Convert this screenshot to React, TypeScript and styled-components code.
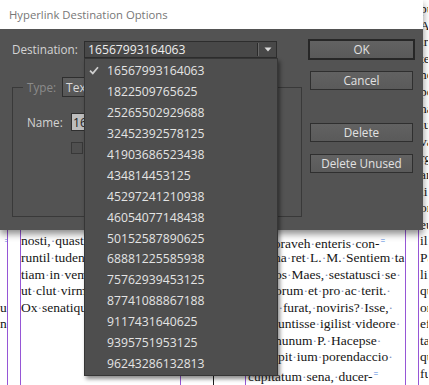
import React from 'react';
import styled, { createGlobalStyle } from 'styled-components';

const GlobalStyle = createGlobalStyle`
  html, body { margin: 0; padding: 0; background: #ffffff; }
  body { width: 429px; height: 385px; overflow: hidden; }
  * { box-sizing: border-box; }
`;

const PURPLE = '#9656d6';

const Stage = styled.div`
  position: relative;
  width: 429px;
  height: 385px;
  overflow: hidden;
  background: #ffffff;
`;

/* ---------- document behind the dialog ---------- */

const Spread = styled.div`
  display: flex;
  height: 100%;
  padding-top: 1px;
  font-family: 'Liberation Serif', 'DejaVu Serif', serif;
  font-size: 13.5px;
  line-height: 16.6px;
  color: #161616;
`;

const Column = styled.div<{ $width: number; $edge?: string; $pad?: number }>`
  flex: 0 0 ${p => p.$width}px;
  width: ${p => p.$width}px;
  border-right: 1px solid ${p => p.$edge ?? 'transparent'};
  padding-left: ${p => p.$pad ?? 0}px;
  display: flex;
  flex-direction: column;
  overflow: hidden;
  white-space: nowrap;
`;

const DocLine = styled.div<{ $indent?: number }>`
  height: 16.6px;
  flex: 0 0 16.6px;
  padding-left: ${p => p.$indent ?? 0}px;
`;

const Dot = styled.span`
  color: #8493bd;
`;

const Mark = styled.span`
  color: #4f86e0;
  font-family: 'Liberation Sans', sans-serif;
  font-size: 8px;
  vertical-align: 5px;
  margin-left: 1px;
`;

/* ---------- dialog ---------- */

const Dialog = styled.div`
  position: absolute;
  left: 0;
  top: 0;
  width: 423px;
  height: 230px;
  display: flex;
  flex-direction: column;
  font-family: 'Open Sans', 'Noto Sans', sans-serif;
  box-shadow: 0 4px 7px rgba(0, 0, 0, 0.45);
  z-index: 2;
`;

const TitleBar = styled.div`
  flex: 0 0 29px;
  height: 29px;
  background: #ffffff;
  display: flex;
  align-items: center;
  padding-left: 9px;
  padding-bottom: 1px;
  color: #777777;
  font-size: 11.3px;
`;

const Body = styled.div`
  flex: 1;
  background: #535353;
  display: flex;
  gap: 6px;
  padding: 10px 8px 0 12px;
`;

const FormCol = styled.div`
  width: 290px;
  display: flex;
  flex-direction: column;
`;

const DestRow = styled.div`
  height: 20px;
  display: flex;
  align-items: center;
`;

const Label = styled.span<{ $width?: number; $dim?: boolean }>`
  flex: 0 0 ${p => (p.$width ? `${p.$width}px` : 'auto')};
  color: ${p => (p.$dim ? '#8b8b8b' : '#d3d3d3')};
  font-size: 11.7px;
  line-height: 16px;
`;

const SelectBox = styled.div`
  position: relative;
  width: 193px;
  height: 17px;
  border: 1px solid #2d2d2d;
  background: #484848;
  display: flex;
  align-items: center;
  padding-left: 3px;
  color: #eeeeee;
  font-size: 12.2px;
`;

const SelectValue = styled.span`
  flex: 1;
  line-height: 15px;
`;

const Divider = styled.span`
  width: 2px;
  height: 13px;
  border-left: 1px solid #2a2a2a;
  border-right: 1px solid #686868;
`;

const ArrowSlot = styled.span`
  width: 17px;
  display: flex;
  justify-content: center;
  align-items: center;
`;

const Menu = styled.div`
  position: absolute;
  left: -1px;
  top: calc(100% + 1px);
  width: 194px;
  background: #4e4e4e;
  border: 1px solid #363636;
  padding: 2px 0 1px;
  box-shadow: 2px 3px 4px rgba(0, 0, 0, 0.45);
  z-index: 5;
`;

const MenuItem = styled.div`
  height: 20.9px;
  display: flex;
  align-items: center;
  color: #e4e4e4;
  font-size: 12.2px;
`;

const CheckSlot = styled.span`
  flex: 0 0 22px;
  display: flex;
  align-items: center;
  padding-left: 4px;
`;

const Group = styled.fieldset`
  margin: 18px 0 0 0;
  padding: 16px 0 0 14px;
  height: 140px;
  border: 1px solid #393939;
  min-width: 0;
`;

const Legend = styled.legend`
  margin-left: -4px;
  padding: 0 4px 0 4px;
  display: flex;
  align-items: center;
  gap: 6px;
`;

const TypeSelect = styled.div`
  width: 150px;
  height: 20px;
  border: 1px solid #2e2e2e;
  background: linear-gradient(#5e5e5e, #575757);
  color: #dadada;
  font-size: 12px;
  display: flex;
  align-items: center;
  padding-left: 3px;
  overflow: hidden;
  white-space: nowrap;
`;

const FieldRow = styled.div`
  display: flex;
  align-items: center;
`;

const TextInput = styled.div`
  width: 190px;
  height: 18px;
  border: 1px solid #2f2f2f;
  background: #bdbdbd;
  color: #1e1e1e;
  font-size: 12.2px;
  display: flex;
  align-items: center;
  padding-left: 1px;
`;

const CheckRow = styled.div`
  display: flex;
  align-items: center;
  margin: 11px 0 0 44px;
`;

const CheckBox = styled.span`
  width: 12px;
  height: 12px;
  border: 1px solid #383838;
  background: #4f4f4f;
`;

const ButtonCol = styled.div`
  width: 107px;
  display: flex;
  flex-direction: column;
  align-items: center;
`;

const Button = styled.div<{ $default?: boolean; $gap?: number }>`
  width: ${p => (p.$default ? 107 : 103)}px;
  height: ${p => (p.$default ? 21 : 19)}px;
  margin-top: ${p => p.$gap ?? 0}px;
  border: ${p => (p.$default ? '2px solid #272727' : '1px solid #2f2f2f')};
  background: linear-gradient(#626262, #5a5a5a);
  color: #e2e2e2;
  font-size: 11.7px;
  display: flex;
  align-items: center;
  justify-content: center;
  padding-bottom: 1px;
`;

/* ---------- data ---------- */

const destinations = [
  '16567993164063',
  '1822509765625',
  '25265502929688',
  '32452392578125',
  '41903686523438',
  '434814453125',
  '45297241210938',
  '46054077148438',
  '50152587890625',
  '68881225585938',
  '75762939453125',
  '87741088867188',
  '9117431640625',
  '9395751953125',
  '96243286132813',
];

type Row = { text: string; indent?: number; mark?: boolean };

const blank = (n: number): Row[] => Array.from({ length: n }, () => ({ text: '' }));

const colA: Row[] = [
  ...blank(14),
  { text: '', mark: true },
  { text: '' },
  { text: '' },
  { text: '' },
  { text: 'u,' },
  { text: 'n·' },
  ...blank(3),
];

const colB: Row[] = [
  ...blank(14),
  { text: 'nosti,·quast' },
  { text: 'runtil·tuden' },
  { text: 'tiam·in·vem' },
  { text: 'ut·clut·virm' },
  { text: 'Ox·senatiqu' },
  ...blank(4),
];

const colC: Row[] = [
  ...blank(14),
  { text: 'poraveh·enteris·con-', indent: 20, mark: true },
  { text: 'na·ret·L.·M.·Sentiem·ta·', indent: 27 },
  { text: 'os·Maes,·sestatusci·se·', indent: 28 },
  { text: 'orum·et·pro·ac·terit.·', indent: 28 },
  { text: ',·furat,·noviris?·Isse,·', indent: 28 },
  { text: 'untisse·igilist·videore·', indent: 31 },
  { text: 'nunum·P.·Hacepse·', indent: 28 },
  { text: 'pit·ium·porendaccio·', indent: 31 },
  { text: 'cupitatum·sena,·ducer-', indent: 1, mark: true },
];

const colD: Row[] = [
  'pu', 'Ad', 'ir', 'te', 'ne', 'pe', 'ha', 'lu', 'va', 'rg', 'an', 'li', 'or', 'eu',
  'ili', 'Pa', 'lil', 'qu', 'or', 'ef', 'ta', 'qu', 'fu',
].map(t => ({ text: t }));

const renderText = (text: string) => {
  const parts = text.split('·');
  return parts.map((part, i) => (
    <React.Fragment key={i}>
      {part}
      {i < parts.length - 1 && <Dot>·</Dot>}
    </React.Fragment>
  ));
};

const Lines: React.FC<{ rows: Row[] }> = ({ rows }) => (
  <>
    {rows.map((r, i) => (
      <DocLine key={i} $indent={r.indent}>
        {r.text ? renderText(r.text) : '\u00a0'}
        {r.mark && <Mark>=</Mark>}
      </DocLine>
    ))}
  </>
);

const Check = () => (
  <svg width="10" height="9" viewBox="0 0 10 9">
    <polyline points="1,4.6 3.8,7.4 9,1.2" fill="none" stroke="#cfcfcf" strokeWidth="1.7" />
  </svg>
);

const Arrow = () => (
  <svg width="8" height="5" viewBox="0 0 8 5">
    <polygon points="0.5,0.5 7.5,0.5 4,4.5" fill="#dcdcdc" />
  </svg>
);

export default function App() {
  const selected = destinations[0];
  return (
    <>
      <GlobalStyle />
      <Stage>
        <Spread>
          <Column $width={8} $edge={PURPLE}>
            <Lines rows={colA} />
          </Column>
          <Column $width={13} $edge={PURPLE} />
          <Column $width={160} $edge={PURPLE}>
            <Lines rows={colB} />
          </Column>
          <Column $width={33} $edge="#1e1e1e" />
          <Column $width={32} $edge={PURPLE} />
          <Column $width={160} $edge={PURPLE} $pad={1}>
            <Lines rows={colC} />
          </Column>
          <Column $width={13} $edge={PURPLE} />
          <Column $width={10} $pad={1}>
            <Lines rows={colD} />
          </Column>
        </Spread>

        <Dialog>
          <TitleBar>Hyperlink Destination Options</TitleBar>
          <Body>
            <FormCol>
              <DestRow>
                <Label $width={72}>Destination:</Label>
                <SelectBox>
                  <SelectValue>{selected}</SelectValue>
                  <Divider />
                  <ArrowSlot>
                    <Arrow />
                  </ArrowSlot>
                  <Menu>
                    {destinations.map(d => (
                      <MenuItem key={d}>
                        <CheckSlot>{d === selected && <Check />}</CheckSlot>
                        {d}
                      </MenuItem>
                    ))}
                  </Menu>
                </SelectBox>
              </DestRow>
              <Group>
                <Legend>
                  <Label $dim>Type:</Label>
                  <TypeSelect>Tex</TypeSelect>
                </Legend>
                <FieldRow>
                  <Label $width={44}>Name:</Label>
                  <TextInput>16</TextInput>
                </FieldRow>
                <CheckRow>
                  <CheckBox />
                </CheckRow>
              </Group>
            </FormCol>
            <ButtonCol>
              <Button $default>OK</Button>
              <Button $gap={11}>Cancel</Button>
              <Button $gap={33}>Delete</Button>
              <Button $gap={12}>Delete Unused</Button>
            </ButtonCol>
          </Body>
        </Dialog>
      </Stage>
    </>
  );
}
